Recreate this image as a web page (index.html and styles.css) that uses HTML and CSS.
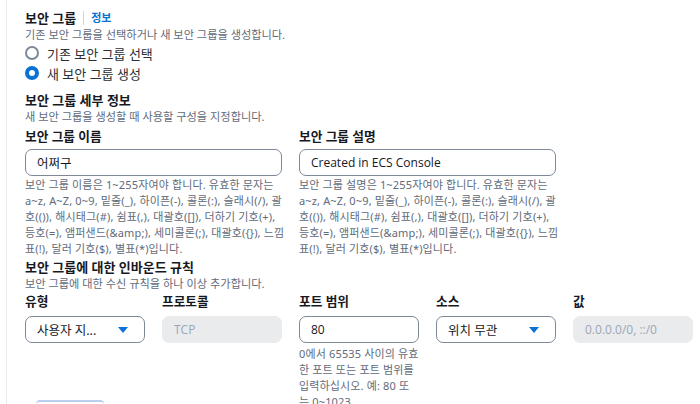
FILE: index.html
```html
<!DOCTYPE html>
<html lang="ko">
<head>
<meta charset="utf-8">
<link rel="stylesheet" href="styles.css">
</head>
<body>
<div class="panel">
  <div class="title-row">
    <span class="title">보안 그룹</span>
    <span class="divider"></span>
    <a class="info">정보</a>
  </div>
  <p class="desc">기존 보안 그룹을 선택하거나 새 보안 그룹을 생성합니다.</p>
  <div class="radios">
    <label class="radio"><span class="dot"></span>기존 보안 그룹 선택</label>
    <label class="radio"><span class="dot on"></span>새 보안 그룹 생성</label>
  </div>

  <h3 class="sub">보안 그룹 세부 정보</h3>
  <p class="desc">새 보안 그룹을 생성할 때 사용할 구성을 지정합니다.</p>

  <div class="two-col">
    <div class="field">
      <div class="label">보안 그룹 이름</div>
      <div class="input">어쩌구</div>
      <p class="help">
        <span class="ln">보안 그룹 이름은 1~255자여야 합니다. 유효한 문자는</span>
        <span class="ln">a~z, A~Z, 0~9, 밑줄(_), 하이픈(-), 콜론(:), 슬래시(/), 괄</span>
        <span class="ln">호(()), 해시태그(#), 쉼표(,), 대괄호([]), 더하기 기호(+),</span>
        <span class="ln">등호(=), 앰퍼샌드(&amp;amp;), 세미콜론(;), 대괄호({}), 느낌</span>
        <span class="ln">표(!), 달러 기호($), 별표(*)입니다.</span>
      </p>
    </div>
    <div class="field">
      <div class="label">보안 그룹 설명</div>
      <div class="input latin">Created in ECS Console</div>
      <p class="help">
        <span class="ln">보안 그룹 설명은 1~255자여야 합니다. 유효한 문자는</span>
        <span class="ln">a~z, A~Z, 0~9, 밑줄(_), 하이픈(-), 콜론(:), 슬래시(/), 괄</span>
        <span class="ln">호(()), 해시태그(#), 쉼표(,), 대괄호([]), 더하기 기호(+),</span>
        <span class="ln">등호(=), 앰퍼샌드(&amp;amp;), 세미콜론(;), 대괄호({}), 느낌</span>
        <span class="ln">표(!), 달러 기호($), 별표(*)입니다.</span>
      </p>
    </div>
  </div>

  <h3 class="sub sub2">보안 그룹에 대한 인바운드 규칙</h3>
  <p class="desc">보안 그룹에 대한 수신 규칙을 하나 이상 추가합니다.</p>

  <div class="rules">
    <div class="rcol">
      <div class="label">유형</div>
      <div class="input select">사용자 지...<span class="caret"></span></div>
      <span class="btn"></span>
    </div>
    <div class="rcol">
      <div class="label">프로토콜</div>
      <div class="input disabled latin">TCP</div>
    </div>
    <div class="rcol">
      <div class="label">포트 범위</div>
      <div class="input latin">80</div>
      <p class="help">
        <span class="ln">0에서 65535 사이의 유효</span>
        <span class="ln">한 포트 또는 포트 범위를</span>
        <span class="ln">입력하십시오. 예: 80 또</span>
        <span class="ln">는 0~1023.</span>
      </p>
    </div>
    <div class="rcol">
      <div class="label">소스</div>
      <div class="input select">위치 무관<span class="caret"></span></div>
    </div>
    <div class="rcol">
      <div class="label">값</div>
      <div class="input disabled latin">0.0.0.0/0, ::/0</div>
    </div>
  </div>
</div>
</body>
</html>
```

FILE: styles.css
```css
* { box-sizing: border-box; }
html, body { margin: 0; padding: 0; background: #fff; }
body {
  font-family: "Noto Sans", "Noto Sans CJK KR", sans-serif;
  color: #16191f;
  width: 700px;
  height: 404px;
  overflow: hidden;
}
.panel {
  margin-left: 6px;
  border-left: 1px solid #e9ebed;
  padding: 9px 0 0 18px;
  min-height: 404px;
}
.title-row { display: flex; align-items: center; height: 18px; }
.title { font-size: 13px; font-weight: 700; line-height: 18px; }
.divider { width: 1px; height: 14px; background: #d1d5db; margin: 0 7px 0 7px; }
.info { font-size: 11px; font-weight: 700; color: #0972d3; line-height: 18px; }
.desc { margin: 0; font-size: 11.2px; line-height: 16px; color: #5f6b7a; }
.radios { margin-top: 0; }
.radio { display: flex; align-items: center; height: 20px; font-size: 13px; color: #2a2f36; }
.dot {
  width: 14px; height: 14px; border-radius: 50%;
  border: 2px solid #7d8998; margin-right: 8px;
}
.dot.on { border: 4px solid #0972d3; }
.sub { margin: 9px 0 0; font-size: 13px; font-weight: 700; line-height: 17px; }
.two-col { display: grid; grid-template-columns: 257px 257px; column-gap: 17px; margin-top: 2px; }
.label { font-size: 12.7px; font-weight: 700; line-height: 18px; }
.input {
  margin-top: 4px;
  height: 27px;
  border: 1.5px solid #7d8998;
  border-radius: 7px;
  padding: 0 11px;
  display: flex; align-items: center;
  font-size: 12.5px;
  color: #16191f;
}
.input.latin { font-family: "Open Sans", "Noto Sans CJK KR", sans-serif; font-size: 12px; }
.help { margin: 1px 0 0; font-size: 11px; line-height: 16px; color: #5f6b7a; letter-spacing: 0.15px; }
.ln { display: block; white-space: nowrap; }
.sub2 { margin-top: 2px; }
.rules { display: grid; grid-template-columns: repeat(5, 120px); column-gap: 17px; }
.rules .input { margin-top: 6px; }
.rules .help { margin-top: 3px; }
.input.select { justify-content: space-between; padding-right: 16px; }
.input.disabled { background: #e9ebed; border-color: #e9ebed; color: #9ba7b6; }
.caret {
  width: 0; height: 0;
  border-left: 5px solid transparent;
  border-right: 5px solid transparent;
  border-top: 6px solid #0972d3;
}
.btn {
  display: block; margin: 57px 0 0 11px;
  width: 68px; height: 20px;
  border-top: 2px solid #b8cff0; border-radius: 4px 4px 0 0;
}
```
